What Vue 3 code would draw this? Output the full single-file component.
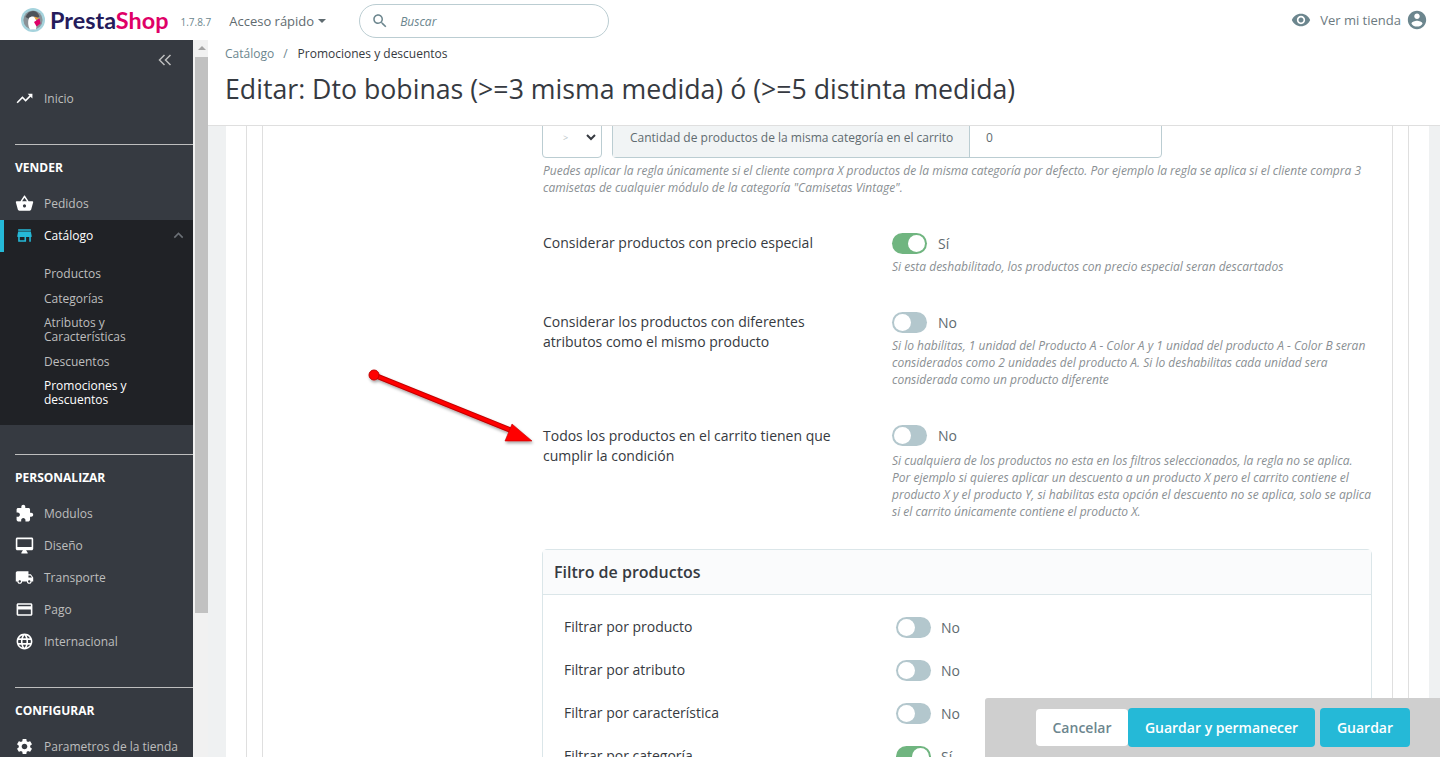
<script setup>
const icons = {
  trending: 'M16 6l2.29 2.29-4.88 4.88-4-4L2 16.59 3.41 18l6-6 4 4 6.3-6.29L22 12V6z',
  basket: 'M17.21 9l-4.38-6.56c-.19-.28-.51-.42-.83-.42-.32 0-.64.14-.83.43L6.79 9H2c-.55 0-1 .45-1 1 0 .09.01.18.04.27l2.54 9.27c.23.84 1 1.46 1.92 1.46h13c.92 0 1.69-.62 1.93-1.46l2.54-9.27L23 10c0-.55-.45-1-1-1h-4.79zM9 9l3-4.4L15 9H9zm3 8c-1.1 0-2-.9-2-2s.9-2 2-2 2 .9 2 2-.9 2-2 2z',
  store: 'M20 4H4v2h16V4zm1 10v-2l-1-5H4l-1 5v2h1v6h10v-6h4v6h2v-6h1zm-9 4H6v-4h6v4z',
  extension: 'M20.5 11H19V7c0-1.1-.9-2-2-2h-4V3.5C13 2.12 11.88 1 10.5 1S8 2.12 8 3.5V5H4c-1.1 0-1.99.9-1.99 2v3.8H3.5c1.49 0 2.7 1.21 2.7 2.7s-1.21 2.7-2.7 2.7H2V20c0 1.1.9 2 2 2h3.8v-1.5c0-1.49 1.21-2.7 2.7-2.7 1.49 0 2.7 1.21 2.7 2.7V22H17c1.1 0 2-.9 2-2v-4h1.5c1.38 0 2.5-1.12 2.5-2.5S21.88 11 20.5 11z',
  desktop: 'M21 2H3c-1.1 0-2 .9-2 2v12c0 1.1.9 2 2 2h7l-2 3v1h8v-1l-2-3h7c1.1 0 2-.9 2-2V4c0-1.1-.9-2-2-2zm0 12H3V4h18v10z',
  shipping: 'M20 8h-3V4H3c-1.1 0-2 .9-2 2v11h2c0 1.66 1.34 3 3 3s3-1.34 3-3h6c0 1.66 1.34 3 3 3s3-1.34 3-3h2v-5l-3-4zM6 18.5c-.83 0-1.5-.67-1.5-1.5s.67-1.5 1.5-1.5 1.5.67 1.5 1.5-.67 1.5-1.5 1.5zm13.5-9l1.96 2.5H17V9.5h2.5zm-1.5 9c-.83 0-1.5-.67-1.5-1.5s.67-1.5 1.5-1.5 1.5.67 1.5 1.5-.67 1.5-1.5 1.5z',
  card: 'M20 4H4c-1.11 0-1.99.89-1.99 2L2 18c0 1.11.89 2 2 2h16c1.11 0 2-.89 2-2V6c0-1.11-.89-2-2-2zm0 14H4v-6h16v6zm0-10H4V6h16v2z',
  language: 'M11.99 2C6.47 2 2 6.48 2 12s4.47 10 9.99 10C17.52 22 22 17.52 22 12S17.52 2 11.99 2zm6.93 6h-2.95c-.32-1.25-.78-2.45-1.38-3.56 1.84.63 3.37 1.91 4.33 3.56zM12 4.04c.83 1.2 1.48 2.53 1.91 3.96h-3.82c.43-1.43 1.08-2.76 1.91-3.96zM4.26 14C4.1 13.36 4 12.69 4 12s.1-1.36.26-2h3.38c-.08.66-.14 1.32-.14 2 0 .68.06 1.34.14 2H4.26zm.82 2h2.95c.32 1.25.78 2.45 1.38 3.56-1.84-.63-3.37-1.9-4.33-3.56zm2.95-8H5.08c.96-1.66 2.49-2.93 4.33-3.56C8.81 5.55 8.35 6.75 8.03 8zM12 19.96c-.83-1.2-1.48-2.53-1.91-3.96h3.82c-.43 1.43-1.08 2.76-1.91 3.96zM14.34 14H9.66c-.09-.66-.16-1.32-.16-2 0-.68.07-1.35.16-2h4.68c.09.65.16 1.32.16 2 0 .68-.07 1.34-.16 2zm.25 5.56c.6-1.11 1.06-2.31 1.38-3.56h2.95c-.96 1.65-2.49 2.93-4.33 3.56zM16.36 14c.08-.66.14-1.32.14-2 0-.68-.06-1.34-.14-2h3.38c.16.64.26 1.31.26 2s-.1 1.36-.26 2h-3.38z',
  settings: 'M19.14 12.94c.04-.3.06-.61.06-.94 0-.32-.02-.64-.07-.94l2.03-1.58c.18-.14.23-.41.12-.61l-1.92-3.32c-.12-.22-.37-.29-.59-.22l-2.39.96c-.5-.38-1.03-.7-1.62-.94l-.36-2.54c-.04-.24-.24-.41-.48-.41h-3.84c-.24 0-.43.17-.47.41l-.36 2.54c-.59.24-1.13.57-1.62.94l-2.39-.96c-.22-.08-.47 0-.59.22L2.74 8.87c-.12.21-.08.47.12.61l2.03 1.58c-.05.3-.09.63-.09.94s.02.64.07.94l-2.03 1.58c-.18.14-.23.41-.12.61l1.92 3.32c.12.22.37.29.59.22l2.39-.96c.5.38 1.03.7 1.62.94l.36 2.54c.05.24.24.41.48.41h3.84c.24 0 .44-.17.47-.41l.36-2.54c.59-.24 1.13-.56 1.62-.94l2.39.96c.22.08.47 0 .59-.22l1.92-3.32c.12-.22.07-.47-.12-.61l-2.01-1.58zM12 15.6c-1.98 0-3.6-1.62-3.6-3.6s1.62-3.6 3.6-3.6 3.6 1.62 3.6 3.6-1.62 3.6-3.6 3.6z',
  eye: 'M12 4.5C7 4.5 2.73 7.61 1 12c1.73 4.39 6 7.5 11 7.5s9.27-3.11 11-7.5c-1.73-4.39-6-7.5-11-7.5zM12 17c-2.76 0-5-2.24-5-5s2.24-5 5-5 5 2.24 5 5-2.24 5-5 5zm0-8c-1.66 0-3 1.34-3 3s1.34 3 3 3 3-1.34 3-3-1.34-3-3-3z',
  account: 'M12 2C6.48 2 2 6.48 2 12s4.48 10 10 10 10-4.48 10-10S17.52 2 12 2zm0 3c1.66 0 3 1.34 3 3s-1.34 3-3 3-3-1.34-3-3 1.34-3 3-3zm0 14.2c-2.5 0-4.71-1.28-6-3.22.03-1.99 4-3.08 6-3.08 1.99 0 5.97 1.09 6 3.08-1.29 1.94-3.5 3.22-6 3.22z',
  search: 'M15.5 14h-.79l-.28-.27C15.41 12.59 16 11.11 16 9.5 16 5.91 13.09 3 9.5 3S3 5.91 3 9.5 5.91 16 9.5 16c1.61 0 3.09-.59 4.23-1.57l.27.28v.79l5 4.99L20.49 19l-4.99-5zm-6 0C7.01 14 5 11.99 5 9.5S7.01 5 9.5 5 14 7.01 14 9.5 11.99 14 9.5 14z',
  up: 'M7.41 15.41L12 10.83l4.59 4.58L18 14l-6-6-6 6z',
};

const subLinks = ['Productos', 'Categorías', 'Atributos y Características', 'Descuentos'];
const customize = [
  { label: 'Modulos', icon: 'extension' },
  { label: 'Diseño', icon: 'desktop' },
  { label: 'Transporte', icon: 'shipping' },
  { label: 'Pago', icon: 'card' },
  { label: 'Internacional', icon: 'language' },
];

const rules = [
  {
    label: 'Considerar productos con precio especial',
    on: true,
    help: ['Si esta deshabilitado, los productos con precio especial seran descartados'],
  },
  {
    label: 'Considerar los productos con diferentes atributos como el mismo producto',
    on: false,
    help: [
      'Si lo habilitas, 1 unidad del Producto A - Color A y 1 unidad del producto A - Color B seran',
      'considerados como 2 unidades del producto A. Si lo deshabilitas cada unidad sera',
      'considerada como un producto diferente',
    ],
  },
  {
    label: 'Todos los productos en el carrito tienen que cumplir la condición',
    on: false,
    help: [
      'Si cualquiera de los productos no esta en los filtros seleccionados, la regla no se aplica.',
      'Por ejemplo si quieres aplicar un descuento a un producto X pero el carrito contiene el',
      'producto X y el producto Y, si habilitas esta opción el descuento no se aplica, solo se aplica',
      'si el carrito únicamente contiene el producto X.',
    ],
  },
];

const filters = [
  { label: 'Filtrar por producto', on: false },
  { label: 'Filtrar por atributo', on: false },
  { label: 'Filtrar por característica', on: false },
  { label: 'Filtrar por categoría', on: true },
];
</script>

<template>
  <div class="page">
    <header class="topbar">
      <svg class="logo-mark" viewBox="0 0 24 24" width="24" height="24">
        <circle cx="12" cy="12" r="12" fill="#a5d3dd" />
        <circle cx="12" cy="12" r="9.6" fill="#8a9297" />
        <path d="M4.5 9c1.5-4 4.5-6 7.5-6s5.500 2 6.500 5.500L15 11l-5 1z" fill="#4d5359" />
        <path d="M8 10c2-2 5-2 6.500 0 1 3 1.500 7 .5 11.500H9c-2-3-2.500-8-1-11.500z" fill="#fff" />
        <path d="M13 8.500l5 1.500-3 2z" fill="#f3a23c" />
        <path d="M13 14l5.500-3.500 1 5-4 3z" fill="#df0067" />
      </svg>
      <span class="wordmark"><span class="presta">Presta</span><span class="shop">Shop</span></span>
      <span class="version">1.7.8.7</span>
      <span class="quick">Acceso rápido<i class="caret"></i></span>
      <div class="search">
        <svg viewBox="0 0 24 24" width="18" height="18"><path :d="icons.search" /></svg>
        <span>Buscar</span>
      </div>
      <div class="shop-link">
        <svg viewBox="0 0 24 24" width="20" height="20"><path :d="icons.eye" /></svg>
        <span>Ver mi tienda</span>
        <svg viewBox="0 0 24 24" width="22" height="22"><path :d="icons.account" /></svg>
      </div>
    </header>

    <div class="workspace">
      <nav class="sidebar">
        <div class="collapse">
          <svg viewBox="0 0 14 12" width="14" height="12"><path d="M6.500 1L1.500 6l5 5M12.500 1l-5 5 5 5" /></svg>
        </div>
        <a class="item home">
          <svg viewBox="0 0 24 24"><path :d="icons.trending" /></svg>
          <span>Inicio</span>
        </a>

        <div class="divider"></div>
        <h4>VENDER</h4>
        <a class="item">
          <svg viewBox="0 0 24 24"><path :d="icons.basket" /></svg>
          <span>Pedidos</span>
        </a>
        <div class="group">
          <a class="item current">
            <svg viewBox="0 0 24 24"><path :d="icons.store" /></svg>
            <span>Catálogo</span>
            <svg class="chevron" viewBox="0 0 24 24"><path :d="icons.up" /></svg>
          </a>
          <ul class="sublist">
            <li v-for="link in subLinks" :key="link">{{ link }}</li>
            <li class="selected">Promociones y descuentos</li>
          </ul>
        </div>

        <div class="divider second"></div>
        <h4>PERSONALIZAR</h4>
        <a v-for="entry in customize" :key="entry.label" class="item">
          <svg viewBox="0 0 24 24"><path :d="icons[entry.icon]" /></svg>
          <span>{{ entry.label }}</span>
        </a>

        <div class="divider"></div>
        <h4>CONFIGURAR</h4>
        <a class="item">
          <svg viewBox="0 0 24 24"><path :d="icons.settings" /></svg>
          <span>Parametros de la tienda</span>
        </a>
      </nav>

      <div class="side-scroll">
        <span class="scroll-up"></span>
        <span class="scroll-thumb"></span>
      </div>

      <main class="main">
        <div class="head">
          <div class="crumbs"><span class="crumb-root">Catálogo</span><span class="crumb-sep">/</span><span>Promociones y descuentos</span></div>
          <h1>Editar: Dto bobinas (&gt;=3 misma medida) ó (&gt;=5 distinta medida)</h1>
        </div>

        <div class="scroller">
          <div class="sheet">
            <div class="sheet-inner">
              <div class="form">
                <div class="qty-row">
                  <div class="fake-select">
                    <span>&gt;</span>
                    <svg viewBox="0 0 10 7" width="10" height="7"><path d="M1 1l4 4 4-4" /></svg>
                  </div>
                  <div class="qty-group">
                    <span class="addon">Cantidad de productos de la misma categoría en el carrito</span>
                    <span class="qty-value">0</span>
                  </div>
                </div>
                <p class="help first-help">
                  Puedes aplicar la regla únicamente si el cliente compra X productos de la misma categoría por defecto. Por ejemplo la regla se aplica si el cliente compra 3<br />
                  camisetas de cualquier módulo de la categoría "Camisetas Vintage".
                </p>

                <div v-for="rule in rules" :key="rule.label" class="rule">
                  <label>{{ rule.label }}</label>
                  <div>
                    <div class="switch-line">
                      <span class="switch" :class="{ on: rule.on }"></span>
                      <span>{{ rule.on ? 'Sí' : 'No' }}</span>
                    </div>
                    <p class="help">
                      <template v-for="line in rule.help" :key="line">{{ line }}<br /></template>
                    </p>
                  </div>
                </div>

                <section class="panel">
                  <h3>Filtro de productos</h3>
                  <div class="panel-body">
                    <div v-for="filter in filters" :key="filter.label" class="filter">
                      <label>{{ filter.label }}</label>
                      <div class="switch-line">
                        <span class="switch" :class="{ on: filter.on }"></span>
                        <span>{{ filter.on ? 'Sí' : 'No' }}</span>
                      </div>
                    </div>
                  </div>
                </section>
              </div>
            </div>
          </div>
        </div>
      </main>
    </div>

    <div class="actions">
      <button class="btn cancel">Cancelar</button>
      <button class="btn primary stay">Guardar y permanecer</button>
      <button class="btn primary">Guardar</button>
    </div>

    <svg class="arrow" width="180" height="85" viewBox="365 365 180 85">
      <defs>
        <filter id="arrow-shadow" x="-10%" y="-20%" width="125%" height="150%">
          <feDropShadow dx="1" dy="2" stdDeviation="1.500" flood-color="#000" flood-opacity="0.35" />
        </filter>
      </defs>
      <g filter="url(#arrow-shadow)">
        <line x1="374" y1="375" x2="515" y2="432" stroke="#c00000" stroke-width="5.500" />
        <line x1="374" y1="375" x2="515" y2="432" stroke="#f00" stroke-width="3.500" />
        <circle cx="374" cy="375" r="5" fill="#f00" stroke="#c00000" />
        <path d="M512 424L532 441L505 441Z" fill="#f00" stroke="#c00000" stroke-width="0.600" />
      </g>
    </svg>
  </div>
</template>

<style>
html,
body {
  margin: 0;
  overflow: hidden;
}
</style>

<style scoped>
.page {
  position: relative;
  display: flex;
  flex-direction: column;
  height: 100vh;
  overflow: hidden;
  font-family: "Open Sans", sans-serif;
  color: #363a41;
  background: #fff;
}

/* Barra superior */
.topbar {
  display: flex;
  align-items: center;
  box-sizing: border-box;
  flex: 0 0 40px;
  padding: 2px 0 0 21px;
  background: #fff;
}

.logo-mark {
  flex: none;
  margin-top: -2px;
}

.wordmark {
  margin-left: 5px;
  margin-top: -2px;
  font-family: Lato, sans-serif;
  font-size: 23.400px;
  font-weight: 700;
}

.presta {
  color: #251b5b;
}

.shop {
  color: #df0067;
}

.version {
  margin-left: 12px;
  margin-top: 1px;
  font-size: 10px;
  color: #6c868e;
}

.quick {
  display: flex;
  align-items: center;
  margin-left: 18px;
  font-size: 13px;
  color: #5f6b70;
}

.caret {
  margin-left: 4px;
  border-top: 4.500px solid #5f6b70;
  border-left: 4.500px solid transparent;
  border-right: 4.500px solid transparent;
}

.search {
  display: flex;
  align-items: center;
  gap: 11px;
  box-sizing: border-box;
  width: 250px;
  height: 34px;
  margin-left: 33px;
  padding-left: 11px;
  border: 1px solid #bbcdd2;
  border-radius: 17px;
  font-size: 12px;
  font-style: italic;
  color: #6c868e;
}

.search svg {
  fill: #6c868e;
}

.shop-link {
  display: flex;
  align-items: center;
  margin: -3px 0 0 auto;
  padding-right: 12px;
  font-size: 13px;
  color: #6c7a80;
}

.shop-link svg {
  fill: #6c868e;
}

.shop-link span {
  margin: 0 5px 0 9px;
}

/* Menu lateral */
.workspace {
  display: flex;
  flex: 1;
  min-height: 0;
}

.sidebar {
  flex: 0 0 193px;
  background: #363a41;
  overflow: hidden;
}

.collapse {
  display: flex;
  justify-content: flex-end;
  align-items: center;
  height: 40px;
  padding-right: 21px;
}

.collapse svg {
  fill: none;
  stroke: #bebebe;
  stroke-width: 1.500;
}

.item {
  display: flex;
  align-items: center;
  height: 32px;
  padding-left: 15px;
  font-size: 12px;
  color: #bebebe;
}

.item svg {
  flex: none;
  width: 19px;
  height: 19px;
  margin-right: 10px;
  fill: #fff;
}

.home {
  margin-top: 2px;
}

.divider {
  height: 1px;
  margin: 30px 0 0 15px;
  background: #bebebe;
}

.divider.second {
  margin-top: 29px;
}

h4 {
  display: flex;
  align-items: center;
  box-sizing: border-box;
  height: 42px;
  margin: 0;
  padding: 2px 0 0 15px;
  font-size: 12px;
  font-weight: 700;
  color: #fff;
}

.group {
  margin-top: 1px;
  background: #202226;
}

.item.current {
  position: relative;
  padding-left: 15px;
  padding-bottom: 2px;
  height: 30px;
  color: #fff;
}

.item.current::before {
  content: "";
  position: absolute;
  left: 0;
  top: 0;
  bottom: 0;
  width: 4px;
  background: #25b9d7;
}

.item.current svg {
  fill: #25b9d7;
}

.item.current svg.chevron {
  width: 19px;
  height: 19px;
  margin: 0 0 0 auto;
  padding-right: 5px;
  fill: #6c7177;
}

.sublist {
  display: flex;
  flex-direction: column;
  gap: 10.500px;
  margin: 0;
  padding: 15px 30px 18px 44px;
  list-style: none;
  font-size: 12px;
  line-height: 14px;
  color: #bebebe;
}

.sublist .selected {
  color: #fff;
}

.side-scroll {
  position: relative;
  flex: 0 0 15px;
  background: #f1f1f1;
}

.scroll-up {
  position: absolute;
  top: 6px;
  left: 5px;
  border-bottom: 4px solid #a3a3a3;
  border-left: 4px solid transparent;
  border-right: 4px solid transparent;
}

.scroll-thumb {
  position: absolute;
  top: 17px;
  left: 2px;
  right: 0;
  height: 556px;
  background: #c1c1c1;
}

/* Contenido */
.main {
  display: flex;
  flex-direction: column;
  flex: 1;
  min-width: 0;
}

.head {
  flex: 0 0 85px;
  padding-left: 17px;
  border-bottom: 1px solid #dfdfdf;
}

.crumbs {
  padding-top: 6px;
  font-size: 12px;
  line-height: 16px;
}

.crumb-root {
  color: #6c868e;
}

.crumb-sep {
  margin: 0 10px 0 9px;
  color: #6c868e;
}

h1 {
  margin: 9px 0 0;
  font-size: 26.700px;
  font-weight: 400;
  line-height: 35px;
  color: #363a41;
}

.scroller {
  flex: 1;
  min-height: 0;
  overflow: hidden;
  padding: 0 11px 0 18px;
  background: #eff1f2;
}

.sheet {
  padding: 0 20px;
  background: #fff;
}

.sheet-inner {
  padding: 0 15px;
  border-left: 1px solid #dfdfdf;
  border-right: 1px solid #dfdfdf;
}

.form {
  padding: 0 20px 0 279px;
  border-left: 1px solid #dfdfdf;
  border-right: 1px solid #dfdfdf;
}

.qty-row {
  display: flex;
  gap: 10px;
  height: 50px;
  margin-top: -18px;
}

.fake-select {
  display: flex;
  align-items: center;
  justify-content: space-between;
  box-sizing: border-box;
  width: 60px;
  padding: 8px 5px 0 20px;
  border: 1px solid #bbcdd2;
  border-radius: 4px;
  font-size: 9px;
  color: #b9c4c8;
}

.fake-select svg {
  fill: none;
  stroke: #363a41;
  stroke-width: 2;
}

.qty-group {
  display: flex;
  box-sizing: border-box;
  width: 550px;
  border: 1px solid #bbcdd2;
  border-radius: 4px;
  font-size: 12px;
}

.addon {
  display: flex;
  align-items: center;
  box-sizing: border-box;
  width: 357px;
  padding: 8px 0 0 17px;
  border-right: 1px solid #bbcdd2;
  background: #f1f4f5;
  color: #5f6b70;
}

.qty-value {
  display: flex;
  align-items: center;
  padding: 8px 0 0 16px;
  color: #5f6b70;
}

.help {
  margin: 4px 0 0;
  font-size: 12px;
  font-style: italic;
  line-height: 17px;
  color: #8a8f93;
}

.first-help {
  padding-left: 1px;
}

.rule {
  display: grid;
  grid-template-columns: 350px 1fr;
  margin-top: 37px;
}

.rule:last-of-type .help {
  margin-top: 6px;
}

.rule label {
  max-width: 300px;
  padding-left: 1px;
  font-size: 14px;
  line-height: 20px;
  color: #363a41;
}

.rule:last-of-type label {
  padding-top: 1px;
}

.switch-line {
  display: flex;
  align-items: center;
  gap: 11px;
  height: 21px;
  font-size: 14px;
  color: #5f6b70;
}

.switch {
  position: relative;
  flex: none;
  width: 35px;
  height: 21px;
  border-radius: 11px;
  background: #b3c7cd;
}

.switch::after {
  content: "";
  position: absolute;
  top: 2px;
  left: 2px;
  width: 17px;
  height: 17px;
  border-radius: 50%;
  background: #fff;
}

.switch.on {
  background: #70b580;
}

.switch.on::after {
  left: 16px;
}

.panel {
  margin-top: 29px;
  border: 1px solid #dbe6e9;
  border-radius: 5px;
}

.panel h3 {
  margin: 0;
  padding: 0 11px;
  font-size: 16px;
  font-weight: 600;
  line-height: 44px;
  color: #363a41;
  background: #fafbfc;
  border-bottom: 1px solid #dbe6e9;
}

.panel-body {
  display: flex;
  flex-direction: column;
  gap: 22px;
  padding: 22px 21px 40px;
}

.filter {
  display: grid;
  grid-template-columns: 332px 1fr;
  height: 21px;
  font-size: 14px;
  line-height: 20px;
  color: #363a41;
}

.filter .switch-line {
  gap: 10px;
}

/* Barra de acciones */
.actions {
  position: absolute;
  right: 0;
  bottom: 0;
  display: flex;
  align-items: center;
  box-sizing: border-box;
  width: 455px;
  height: 59px;
  padding: 0 30px 0 51px;
  background: #cfcfcf;
  border-top-left-radius: 3px;
}

.btn {
  height: 39px;
  padding: 0;
  border: none;
  border-radius: 4px;
  font-family: inherit;
  font-size: 14px;
  font-weight: 600;
}

.cancel {
  width: 92px;
  height: 37px;
  color: #6c868e;
  background: #fff;
}

.primary {
  width: 90px;
  color: #fff;
  background: #25b9d7;
}

.stay {
  width: 187px;
  margin-right: 5px;
}

.arrow {
  position: absolute;
  left: 365px;
  top: 365px;
  pointer-events: none;
}
</style>
